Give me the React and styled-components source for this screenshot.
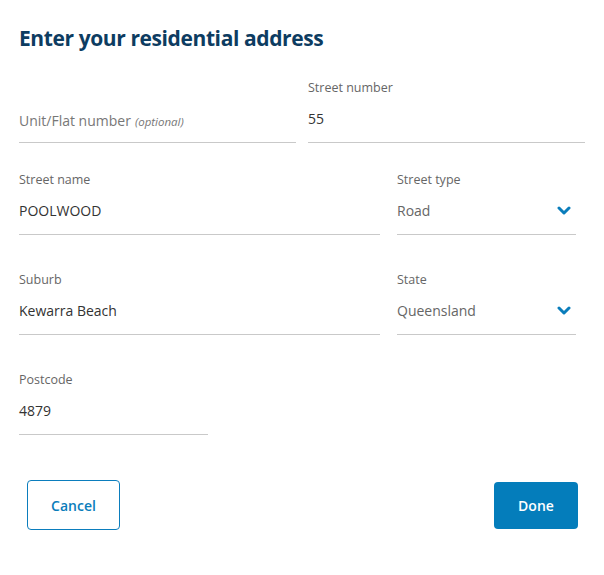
import styled, { createGlobalStyle } from "styled-components";

const GlobalStyle = createGlobalStyle`
  html, body {
    margin: 0;
    padding: 0;
    background: #fff;
  }
  body {
    font-family: "Open Sans", "Noto Sans", sans-serif;
  }
`;

const Page = styled.div`
  width: 566px;
  padding: 23px 19px 0 19px;
`;

const Title = styled.h1`
  margin: 0 0 26px 0;
  font-size: 21px;
  line-height: 30px;
  font-weight: 700;
  letter-spacing: -0.4px;
  color: #0d3c61;
`;

const Row = styled.div`
  display: grid;
  grid-template-columns: ${(p) => p.$cols};
  column-gap: ${(p) => p.$gap || "17px"};
  margin-bottom: ${(p) => p.$after || "35px"};
`;

const Field = styled.div`
  display: flex;
  flex-direction: column;
`;

const Label = styled.div`
  font-size: 12.5px;
  line-height: 18px;
  color: #666;
  height: 18px;
  margin-bottom: 2px;
`;

const Value = styled.div`
  height: 44px;
  box-sizing: border-box;
  padding: ${(p) => (p.$placeholder ? "2px 0 2px 0" : "0 0 4px 0")};
  line-height: 40px;
  font-size: 14px;
  color: ${(p) => (p.$placeholder ? "#777" : p.$select ? "#666" : "#333")};
  border-bottom: 1px solid #c9c9c9;
  display: flex;
  align-items: flex-start;
  justify-content: space-between;
`;

const Optional = styled.em`
  font-size: 11.5px;
  color: #777;
  margin-left: 4px;
`;

const Chevron = styled.svg`
  width: 14px;
  height: 10px;
  margin: 15px 5px 0 0;
`;

const Footer = styled.div`
  display: flex;
  justify-content: space-between;
  align-items: center;
  margin: 11px 7px 0 8px;
`;

const Button = styled.button`
  font-family: inherit;
  font-size: 14px;
  font-weight: 600;
  border-radius: 4px;
  cursor: pointer;
  width: ${(p) => (p.$primary ? "84px" : "93px")};
  height: ${(p) => (p.$primary ? "47px" : "50px")};
  border: ${(p) => (p.$primary ? "none" : "1px solid #0b7dbd")};
  background: ${(p) => (p.$primary ? "#047dbb" : "#fff")};
  color: ${(p) => (p.$primary ? "#fff" : "#0a7dbb")};
`;

const ChevronDown = () => (
  <Chevron viewBox="0 0 14 10">
    <path d="M2 2 L7 7 L12 2" fill="none" stroke="#0a7dbb" strokeWidth="3" strokeLinecap="round" strokeLinejoin="round" />
  </Chevron>
);

const App = () => {
  return (
    <Page>
      <GlobalStyle />
      <Title>Enter your residential address</Title>
      <Row $cols="1fr 1fr" $gap="12px" $after="28px">
        <Field>
          <Label />
          <Value $placeholder>
            <span>
              Unit/Flat number<Optional>(optional)</Optional>
            </span>
          </Value>
        </Field>
        <Field>
          <Label>Street number</Label>
          <Value>55</Value>
        </Field>
      </Row>
      <Row $cols="361px 179px" $after="36px">
        <Field>
          <Label>Street name</Label>
          <Value>POOLWOOD</Value>
        </Field>
        <Field>
          <Label>Street type</Label>
          <Value $select>
            Road
            <ChevronDown />
          </Value>
        </Field>
      </Row>
      <Row $cols="361px 179px" $after="36px">
        <Field>
          <Label>Suburb</Label>
          <Value>Kewarra Beach</Value>
        </Field>
        <Field>
          <Label>State</Label>
          <Value $select>
            Queensland
            <ChevronDown />
          </Value>
        </Field>
      </Row>
      <Row $cols="189px" $after="45px">
        <Field>
          <Label>Postcode</Label>
          <Value>4879</Value>
        </Field>
      </Row>
      <Footer>
        <Button>Cancel</Button>
        <Button $primary>Done</Button>
      </Footer>
    </Page>
  );
};

export default App;
